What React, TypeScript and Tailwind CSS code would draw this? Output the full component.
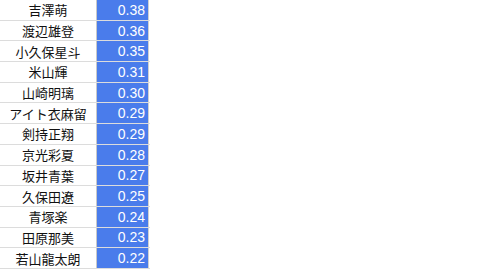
const rows: { name: string; score: string }[] = [
  { name: "吉澤萌", score: "0.38" },
  { name: "渡辺雄登", score: "0.36" },
  { name: "小久保星斗", score: "0.35" },
  { name: "米山輝", score: "0.31" },
  { name: "山崎明璃", score: "0.30" },
  { name: "アイト衣麻留", score: "0.29" },
  { name: "剣持正翔", score: "0.29" },
  { name: "京光彩夏", score: "0.28" },
  { name: "坂井青葉", score: "0.27" },
  { name: "久保田遼", score: "0.25" },
  { name: "青塚楽", score: "0.24" },
  { name: "田原那美", score: "0.23" },
  { name: "若山龍太朗", score: "0.22" },
];

export default function App() {
  return (
    <div className="w-[490px] h-[270px] overflow-hidden bg-white">
      {/* score table */}
      <div className="w-[150px] flex flex-col">
        {rows.map((r) => (
          <div key={r.name} className="flex h-[20.7px] border-b border-[#dcdcdc]">
            <div className="w-[97px] border-r border-[#c8c8c8] flex items-center justify-center text-[13px] text-[#111] leading-none font-['Noto_Sans_CJK_JP',sans-serif]">
              {r.name}
            </div>
            <div className="w-[52px] bg-[#4a7ceb] border-r border-[#d0d0d0] flex items-center justify-end pr-[3px] text-[14px] text-white leading-none font-['Liberation_Sans',Arial,sans-serif]">
              {r.score}
            </div>
          </div>
        ))}
      </div>
    </div>
  );
}
